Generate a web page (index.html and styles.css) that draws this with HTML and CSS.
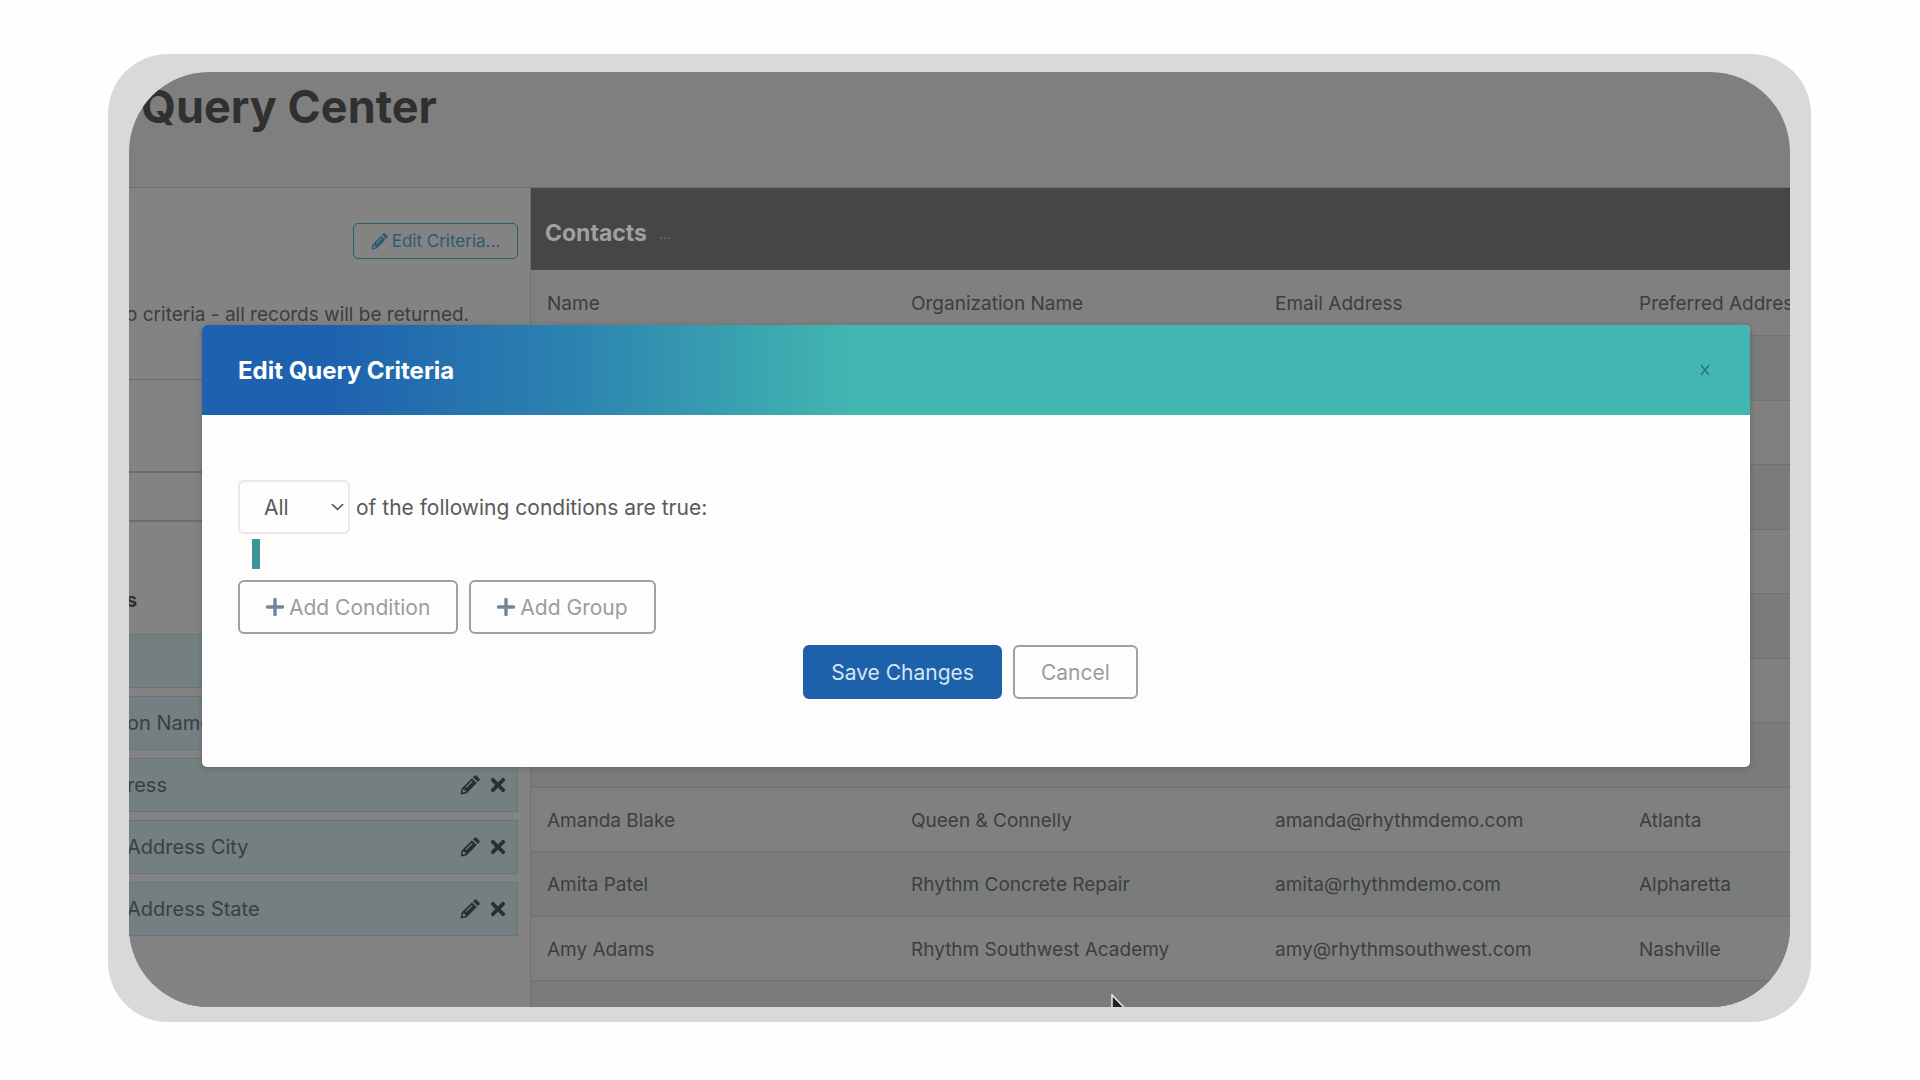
FILE: index.html
```html
<!DOCTYPE html>
<html lang="en">
<head>
<meta charset="utf-8">
<title>Query Center</title>
<link rel="stylesheet" href="styles.css">
</head>
<body>
<svg class="sprite" aria-hidden="true">
  <symbol id="pencil" viewBox="0 0 20 20">
    <path fill="currentColor" fill-rule="evenodd" d="M0.600 19.400L1.600 13.600L12 3.200L16.800 8L6.400 18.400ZM13 2.200L14.600 0.700Q15.600 -0.200 16.600 0.700L19.300 3.400Q20.200 4.400 19.300 5.400L17.800 7ZM3 14.600L2.500 17L3.200 17.600L5.600 17L5.600 15.600L4.400 15.600L4.400 14.400ZM5.400 12.300L6.200 13.100L12.600 6.700L11.800 5.900Z"/>
  </symbol>
  <symbol id="cross" viewBox="0 0 14 14">
    <path d="M2.500 2.500L11.500 11.500M11.500 2.500L2.500 11.500" stroke="currentColor" stroke-width="3.300" stroke-linecap="round"/>
  </symbol>
  <symbol id="plus" viewBox="0 0 18 18">
    <path d="M9 1.500V16.500M1.500 9H16.500" stroke="currentColor" stroke-width="3.400" stroke-linecap="round"/>
  </symbol>
</svg>
<div class="frame">
  <div class="screen">
    <header class="page-header"><h1>Query Center</h1></header>
    <div class="workspace">
      <aside class="criteria">
        <div class="criteria-top">
          <button class="edit-button" type="button"><svg class="icon-small"><use href="#pencil"/></svg>Edit Criteria...</button>
        </div>
        <p class="criteria-note">o criteria - all records will be returned.</p>
        <div class="section"></div>
        <div class="section section-short"></div>
        <h2 class="columns-title">s</h2>
        <ul class="columns">
          <li></li>
          <li><span>on Name</span></li>
          <li><span>ress</span><button type="button" aria-label="Edit"><svg class="icon-pencil"><use href="#pencil"/></svg></button><button type="button" aria-label="Remove"><svg class="icon-cross"><use href="#cross"/></svg></button></li>
          <li><span>Address City</span><button type="button" aria-label="Edit"><svg class="icon-pencil"><use href="#pencil"/></svg></button><button type="button" aria-label="Remove"><svg class="icon-cross"><use href="#cross"/></svg></button></li>
          <li><span>Address State</span><button type="button" aria-label="Edit"><svg class="icon-pencil"><use href="#pencil"/></svg></button><button type="button" aria-label="Remove"><svg class="icon-cross"><use href="#cross"/></svg></button></li>
        </ul>
      </aside>
      <main class="results">
        <div class="results-bar"><h2>Contacts</h2><span class="more">...</span></div>
        <table>
          <thead><tr><th>Name</th><th>Organization Name</th><th>Email Address</th><th>Preferred Address</th></tr></thead>
          <tbody>
            <tr><td colspan="4"></td></tr>
            <tr><td colspan="4"></td></tr>
            <tr><td colspan="4"></td></tr>
            <tr><td colspan="4"></td></tr>
            <tr><td colspan="4"></td></tr>
            <tr><td colspan="4"></td></tr>
            <tr><td colspan="4"></td></tr>
            <tr><td>Amanda Blake</td><td>Queen &amp; Connelly</td><td>amanda@rhythmdemo.com</td><td>Atlanta</td></tr>
            <tr><td>Amita Patel</td><td>Rhythm Concrete Repair</td><td>amita@rhythmdemo.com</td><td>Alpharetta</td></tr>
            <tr><td>Amy Adams</td><td>Rhythm Southwest Academy</td><td>amy@rhythmsouthwest.com</td><td>Nashville</td></tr>
            <tr><td colspan="4"></td></tr>
          </tbody>
        </table>
      </main>
    </div>
    <section class="modal" role="dialog" aria-labelledby="modal-title">
      <header class="modal-header">
        <h2 id="modal-title">Edit Query Criteria</h2>
        <button class="close" type="button" aria-label="Close"><svg viewBox="0 0 10 12"><path d="M1 1L9 11M9 1L1 11" stroke="currentColor" stroke-width="1.500"/></svg></button>
      </header>
      <form class="modal-body">
        <div class="match">
          <span class="select-box">
            <select id="match"><option>All</option></select>
            <svg class="chevron" viewBox="0 0 14 8"><path d="M1.500 1.500L7 6.500L12.500 1.500" fill="none" stroke="currentColor" stroke-width="1.800" stroke-linecap="round"/></svg>
          </span>
          <label for="match">of the following conditions are true:</label>
        </div>
        <div class="group-mark"></div>
        <div class="actions">
          <button class="button" type="button"><svg><use href="#plus"/></svg>Add Condition</button>
          <button class="button" type="button"><svg><use href="#plus"/></svg>Add Group</button>
        </div>
        <div class="actions actions-center">
          <button class="button button-primary" type="button">Save Changes</button>
          <button class="button" type="button">Cancel</button>
        </div>
      </form>
    </section>
    <svg class="cursor" viewBox="0 0 20 28"><path d="M1 1V22L6 17.500L9.500 26L13 24.500L9.500 16.500H16Z" fill="#222" stroke="#e8e8e8" stroke-width="1.500"/></svg>
  </div>
</div>
</body>
</html>
```
FILE: styles.css
```css
* { box-sizing: border-box; }
body {
  margin: 0;
  padding: 54px 109px 58px 108px;
  background: #fefefe;
  color: #3c3e40;
  font-family: Inter, "Open Sans", sans-serif;
  font-size: 20px;
}
h1, h2, p, ul { margin: 0; padding: 0; }
button, select { font: inherit; color: inherit; margin: 0; }
.sprite { position: absolute; width: 0; height: 0; }

.frame {
  height: calc(100vh - 112px);
  padding: 18px 21px 15px;
  border-radius: 60px;
  background: #d9d9d9;
}
.screen {
  position: relative;
  display: flex;
  flex-direction: column;
  height: 100%;
  overflow: hidden;
  border-radius: 80px;
  background: #7f7f7f;
}
.page-header {
  flex: none;
  height: 116px;
  padding: 8px 12px;
  border-bottom: 1px solid #6c6f70;
}
h1 { font-size: 45px; line-height: 54px; color: #303030; }
.workspace { display: flex; flex: 1; min-height: 0; }

.criteria {
  flex: none;
  width: 405px;
  margin-left: -3px;
  padding-top: 35px;
  border-right: 1px solid #6f6f6f;
  background: #838383;
}
.criteria-top { display: flex; justify-content: flex-end; padding-right: 12px; }
.edit-button {
  display: flex;
  align-items: center;
  justify-content: center;
  gap: 4px;
  width: 165px;
  height: 36px;
  padding: 0;
  border: 1px solid #2c5b6e;
  border-radius: 5px;
  background: none;
  color: #2c5b6e;
  font-size: 17px;
}
.icon-small { width: 17px; height: 17px; }
.criteria-note { height: 121px; padding-top: 43px; font-size: 19px; line-height: 26px; white-space: nowrap; border-bottom: 1px solid #6c6c6c; }
.section { height: 93px; border-bottom: 2px solid #6c6c6c; }
.section-short { height: 49px; }
.columns-title { height: 112px; padding: 65px 0 0; font-size: 20px; line-height: 26px; color: #303030; }
.columns { display: flex; flex-direction: column; gap: 8px; padding-right: 12px; list-style: none; }
.columns li {
  display: flex;
  align-items: center;
  gap: 10px;
  height: 54px;
  padding-right: 11px;
  border: 1px solid #687577;
  background: #737f80;
}
.columns span { flex: 1; }
.columns button { display: flex; padding: 0; border: 0; background: none; color: #2e2e2e; }
.icon-pencil { width: 20px; height: 20px; }
.icon-cross { width: 16px; height: 16px; }

.results { flex: 1; min-width: 0; overflow: hidden; }
.results-bar {
  display: flex;
  align-items: center;
  gap: 12px;
  height: 82px;
  padding: 8px 14px 0;
  background: #464646;
  color: #a0a0a0;
}
.results-bar h2 { font-size: 23px; }
.more { font-size: 14px; color: #707070; }
table { width: 1456px; border-collapse: collapse; table-layout: fixed; background: #808080; font-size: 19px; }
th, td { padding: 2px 16px 0; border-bottom: 1px solid #707272; text-align: left; font-weight: 400; white-space: nowrap; }
thead tr { height: 65px; }
tbody tr { height: 64px; }
tbody tr:nth-child(odd) { height: 65px; background: #7a7c7b; }

.modal {
  position: absolute;
  top: 253px;
  left: 73px;
  right: 40px;
  border-radius: 5px;
  overflow: hidden;
  background: #fdfdfd;
  box-shadow: 0 1px 6px #00000033;
}
.modal-header {
  display: flex;
  align-items: center;
  justify-content: space-between;
  height: 90px;
  padding: 0 36px;
  background: linear-gradient(90deg, #1e61ae 8%, #2c83b0 24%, #42b6b0 42%);
  color: #fff;
}
.modal-header h2 { font-size: 24px; }
.close { display: flex; padding: 4px; border: 0; background: none; color: #2d7488; }
.close svg { width: 10px; height: 12px; }
.modal-body { padding: 65px 36px 68px; font-size: 21px; color: #5a5a5a; }
.match { display: flex; align-items: center; gap: 6px; }
.select-box { position: relative; display: flex; }
select {
  width: 112px;
  height: 54px;
  padding: 0 24px;
  border: 2px solid #e8e8e8;
  border-radius: 6px;
  background: none;
  appearance: none;
}
.chevron { position: absolute; right: 6px; top: 23px; width: 13px; height: 8px; pointer-events: none; }
.group-mark { width: 8px; height: 30px; margin: 5px 14px 11px; background: #3f9494; }
.actions { display: flex; }
.actions-center { justify-content: center; margin-top: 11px; }
.button {
  display: flex;
  align-items: center;
  gap: 5px;
  height: 54px;
  margin-right: 11px;
  padding: 0 26px;
  border: 2px solid #9aa1a8;
  border-radius: 6px;
  background: none;
  color: #999da2;
}
.button svg { width: 18px; height: 18px; color: #73859a; }
.button-primary { border-color: #1e61ab; background: #1e61ab; color: #d5e5f2; }
.cursor { position: absolute; left: 982px; top: 922px; width: 20px; height: 28px; }
```
